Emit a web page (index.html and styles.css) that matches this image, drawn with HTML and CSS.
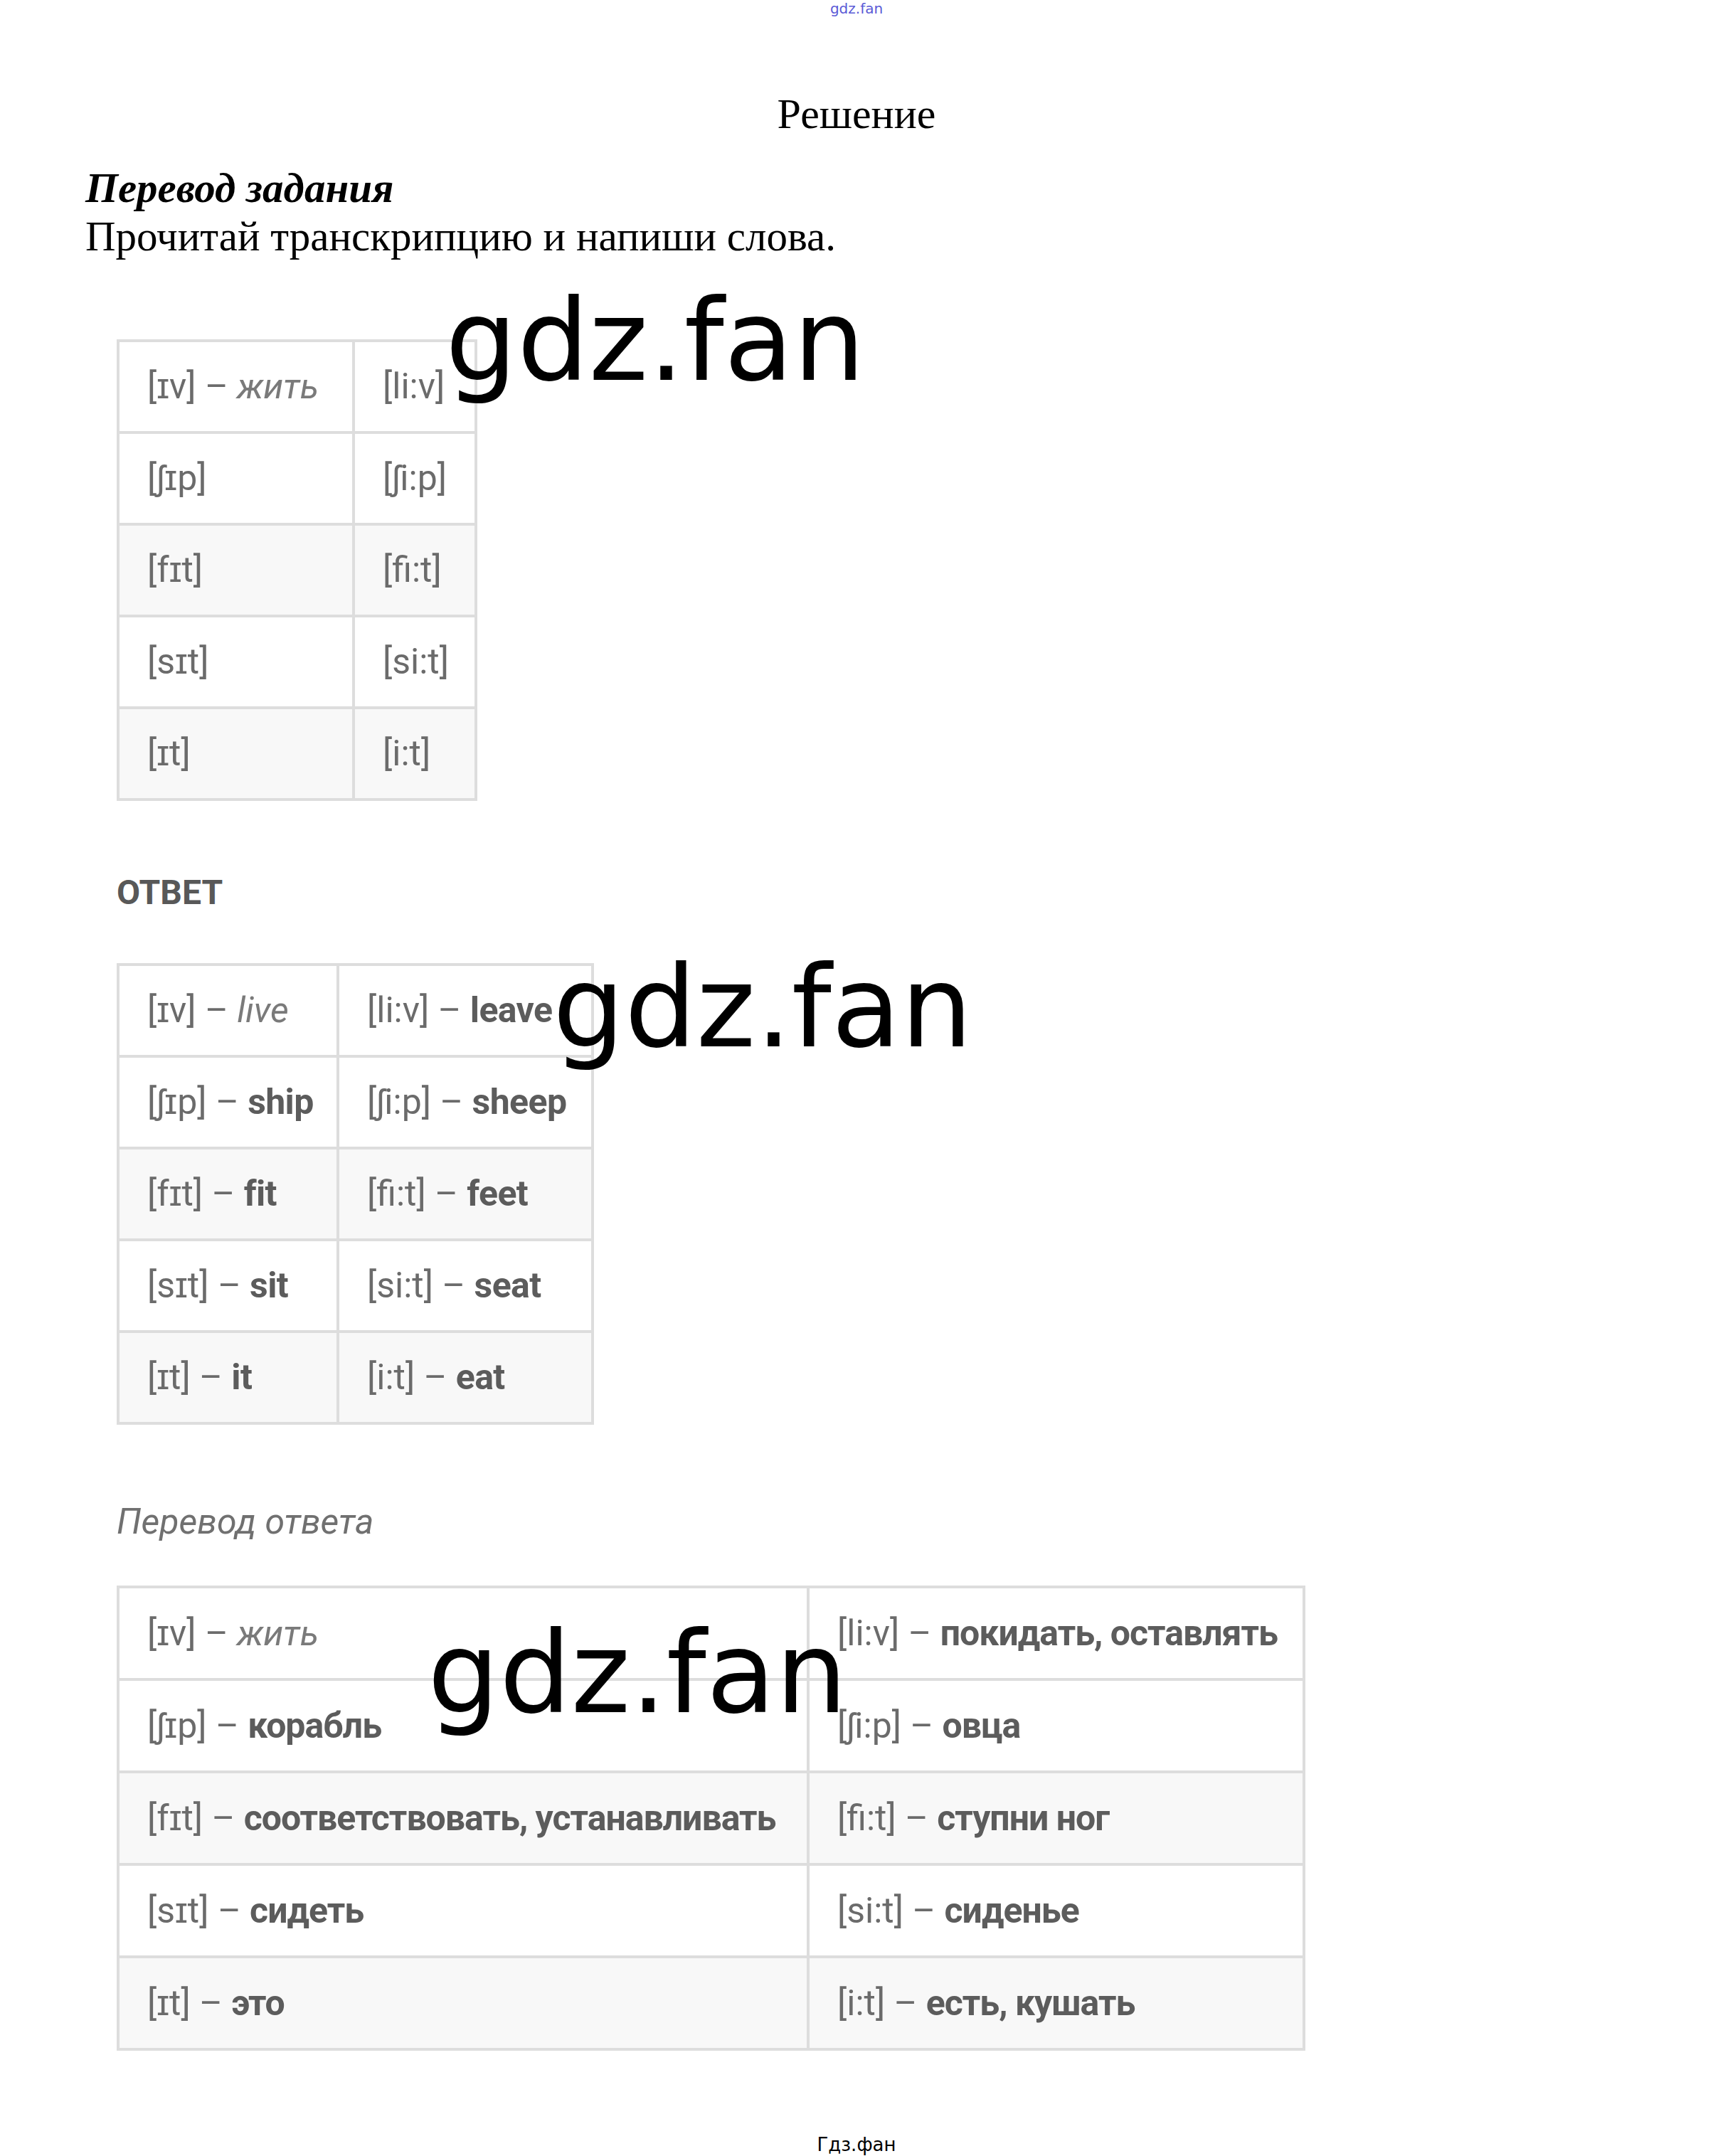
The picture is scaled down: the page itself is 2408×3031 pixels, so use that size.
FILE: index.html
```html
<!DOCTYPE html>
<html lang="ru">
<head>
<meta charset="utf-8">
<title>Решение</title>
<link rel="stylesheet" href="styles.css">
</head>
<body>
<div class="top-mark">gdz.fan</div>
<h1 class="title">Решение</h1>
<section class="task">
  <h2 class="task-head">Перевод задания</h2>
  <p class="task-text">Прочитай транскрипцию и напиши слова.</p>
</section>

<section class="answer">
  <div class="tbl tbl-1">
    <div class="row"><div class="cell">[ɪv] – <i class="it">жить</i></div><div class="cell">[li:v]</div></div>
    <div class="row"><div class="cell">[ʃɪp]</div><div class="cell">[ʃi:p]</div></div>
    <div class="row alt"><div class="cell">[fɪt]</div><div class="cell">[fi:t]</div></div>
    <div class="row"><div class="cell">[sɪt]</div><div class="cell">[si:t]</div></div>
    <div class="row alt"><div class="cell">[ɪt]</div><div class="cell">[i:t]</div></div>
  </div>

  <div class="label">ОТВЕТ</div>

  <div class="tbl tbl-2">
    <div class="row"><div class="cell">[ɪv] – <i class="it">live</i></div><div class="cell">[li:v] – <b>leave</b></div></div>
    <div class="row"><div class="cell">[ʃɪp] – <b>ship</b></div><div class="cell">[ʃi:p] – <b>sheep</b></div></div>
    <div class="row alt"><div class="cell">[fɪt] – <b>fit</b></div><div class="cell">[fi:t] – <b>feet</b></div></div>
    <div class="row"><div class="cell">[sɪt] – <b>sit</b></div><div class="cell">[si:t] – <b>seat</b></div></div>
    <div class="row alt"><div class="cell">[ɪt] – <b>it</b></div><div class="cell">[i:t] – <b>eat</b></div></div>
  </div>

  <div class="label-it">Перевод ответа</div>

  <div class="tbl tbl-3">
    <div class="row"><div class="cell">[ɪv] – <i class="it">жить</i></div><div class="cell">[li:v] – <b>покидать, оставлять</b></div></div>
    <div class="row"><div class="cell">[ʃɪp] – <b>корабль</b></div><div class="cell">[ʃi:p] – <b>овца</b></div></div>
    <div class="row alt"><div class="cell">[fɪt] – <b>соответствовать, устанавливать</b></div><div class="cell">[fi:t] – <b>ступни ног</b></div></div>
    <div class="row"><div class="cell">[sɪt] – <b>сидеть</b></div><div class="cell">[si:t] – <b>сиденье</b></div></div>
    <div class="row alt"><div class="cell">[ɪt] – <b>это</b></div><div class="cell">[i:t] – <b>есть, кушать</b></div></div>
  </div>
</section>

<div class="footer">Гдз.фан</div>

<div class="wm wm-1">gdz.fan</div>
<div class="wm wm-2">gdz.fan</div>
<div class="wm wm-3">gdz.fan</div>
</body>
</html>
```

FILE: styles.css
```css
html, body {
  margin: 0;
  padding: 0;
  background: #ffffff;
}
body {
  position: relative;
  width: 2408px;
  min-height: 3031px;
  font-family: "Liberation Serif", "Times New Roman", serif;
  color: #000;
}

.top-mark {
  height: 24px;
  line-height: 24px;
  text-align: center;
  font-family: "DejaVu Sans", sans-serif;
  font-size: 20px;
  color: #5a5ad6;
}

.title {
  margin: 102px 0 0;
  font-size: 60px;
  line-height: 68px;
  font-weight: normal;
  text-align: center;
}

.task {
  margin-top: 36px;
  padding-left: 120px;
}
.task-head {
  margin: 0;
  font-size: 59px;
  line-height: 68px;
  font-weight: bold;
  font-style: italic;
}
.task-text {
  margin: 0;
  font-size: 59px;
  line-height: 68px;
}

.answer {
  margin-top: 111px;
  padding-left: 164px;
  font-family: Roboto, "Liberation Sans", sans-serif;
  font-size: 50px;
  color: #6b6b6b;
}

.tbl {
  display: grid;
  width: max-content;
  border-top: 4px solid #dddddd;
  border-left: 4px solid #dddddd;
}
.tbl-1 { grid-template-columns: 331px 172px; }
.tbl-2 { grid-template-columns: 309px 358px; }
.tbl-3 { grid-template-columns: 970px 697px; }

.row { display: contents; }
.cell {
  box-sizing: border-box;
  height: 129px;
  line-height: 125px;
  padding-left: 39px;
  border-right: 4px solid #dddddd;
  border-bottom: 4px solid #dddddd;
  background: #ffffff;
  white-space: nowrap;
}
.tbl-3 .cell {
  height: 130px;
  line-height: 126px;
}
.row.alt .cell { background: #f8f8f8; }

.cell b {
  font-weight: bold;
  color: #5c5c5c;
  letter-spacing: -0.6px;
}
.tbl-3 .cell b { letter-spacing: -1px; }
.cell .it {
  font-style: italic;
  color: #7a7a7a;
}

.label {
  margin-top: 99px;
  margin-bottom: 69px;
  font-size: 48px;
  line-height: 60px;
  font-weight: bold;
  color: #585858;
}
.label-it {
  margin-top: 106px;
  margin-bottom: 60px;
  font-size: 50px;
  line-height: 60px;
  font-style: italic;
  color: #707070;
}

.footer {
  margin-top: 117px;
  text-align: center;
  font-family: "DejaVu Sans", sans-serif;
  font-size: 26px;
  line-height: 30px;
  color: #000;
}

.wm {
  position: absolute;
  font-family: "DejaVu Sans", sans-serif;
  font-size: 159px;
  line-height: 1;
  color: #000;
  white-space: nowrap;
}
.wm-1 { left: 626px; top: 399px; }
.wm-2 { left: 777px; top: 1336px; }
.wm-3 { left: 601px; top: 2272px; }
```
